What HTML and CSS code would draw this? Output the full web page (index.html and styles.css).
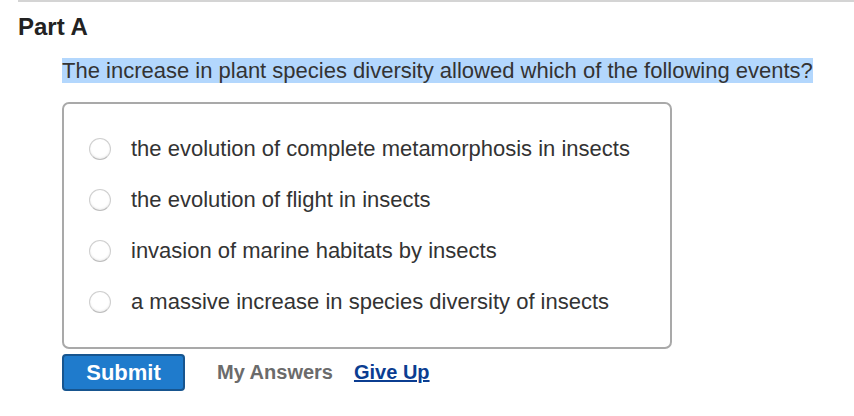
FILE: index.html
```html
<!DOCTYPE html>
<html>
<head>
<meta charset="utf-8">
<link rel="stylesheet" href="styles.css">
</head>
<body>
<div class="page">
  <h2 class="part-title">Part A</h2>
  <div class="content">
    <p class="question"><span class="hl">The increase in plant species diversity allowed which of the following events?</span></p>
    <div class="choices">
      <label class="choice"><span class="radio"></span><span class="choice-text">the evolution of complete metamorphosis in insects</span></label>
      <label class="choice"><span class="radio"></span><span class="choice-text">the evolution of flight in insects</span></label>
      <label class="choice"><span class="radio"></span><span class="choice-text">invasion of marine habitats by insects</span></label>
      <label class="choice"><span class="radio"></span><span class="choice-text">a massive increase in species diversity of insects</span></label>
    </div>
    <div class="actions">
      <button class="submit">Submit</button>
      <span class="my-answers">My Answers</span>
      <a class="give-up" href="#">Give Up</a>
    </div>
  </div>
</div>
</body>
</html>
```
FILE: styles.css
```css
html, body {
  margin: 0;
  padding: 0;
  background: #fff;
}
body {
  font-family: "Liberation Sans", Arial, sans-serif;
  color: #333;
}
.page {
  margin-left: 18px;
  border-top: 2px solid #d4d4d4;
}
.part-title {
  margin: 0;
  padding-top: 12px;
  font-size: 24px;
  line-height: 26px;
  font-weight: bold;
  color: #222;
}
.content {
  margin-left: 44px;
}
.question {
  margin: 19px 0 0 0;
  font-size: 22px;
  line-height: 24px;
}
.hl {
  background: #b3d7fd;
  padding: 0;
}
.choices {
  margin-top: 19px;
  width: 610px;
  height: 247px;
  border: 2px solid #a9a9a9;
  border-radius: 7px;
  box-sizing: border-box;
  padding-top: 19px;
}
.choice {
  display: flex;
  align-items: center;
  height: 51px;
  padding-left: 25px;
}
.radio {
  width: 20px;
  height: 20px;
  border-radius: 50%;
  border: 1px solid #cfcfcf;
  border-bottom-color: #bdbdbd;
  box-shadow: inset 0 -1px 2px rgba(0,0,0,0.08);
  background: #fff;
  flex: none;
}
.choice-text {
  margin-left: 20px;
  font-size: 22px;
  color: #333;
}
.actions {
  display: flex;
  align-items: center;
  margin-top: 5px;
}
.submit {
  width: 123px;
  height: 37px;
  background: #1f7bcc;
  border: 2px solid #17558f;
  border-radius: 4px;
  color: #fff;
  font-family: "Liberation Sans", Arial, sans-serif;
  font-weight: bold;
  font-size: 22px;
  padding: 0;
}
.my-answers {
  margin-left: 32px;
  font-weight: bold;
  font-size: 20px;
  color: #6b6b6b;
}
.give-up {
  margin-left: 21px;
  font-weight: bold;
  font-size: 20px;
  color: #0b3d91;
  text-decoration: underline;
}
```
